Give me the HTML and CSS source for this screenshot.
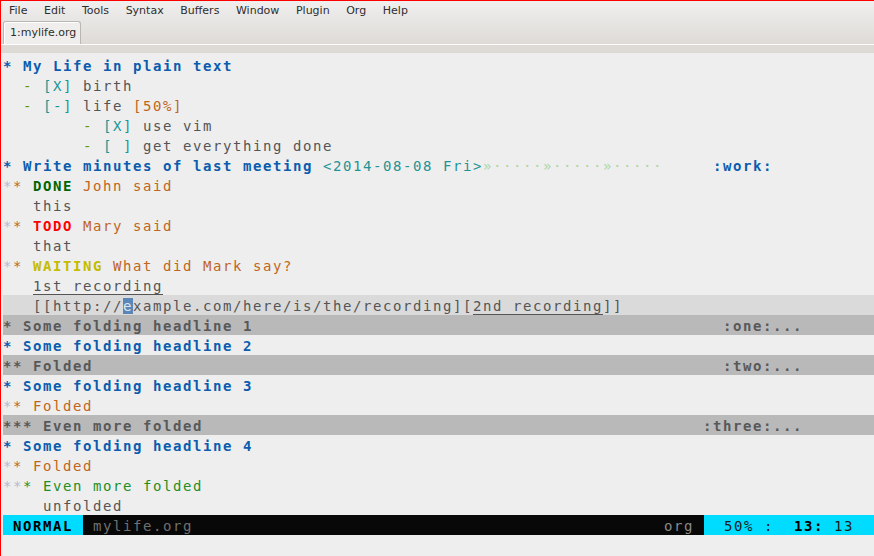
FILE: index.html
```html
<!DOCTYPE html>
<html>
<head>
<meta charset="utf-8">
<title>mylife.org</title>
<link rel="stylesheet" href="styles.css">
</head>
<body>
<div class="win">
  <div class="chrome">
    <nav class="menubar">
      <span class="mi">File</span><span class="mi">Edit</span><span class="mi">Tools</span><span class="mi">Syntax</span><span class="mi">Buffers</span><span class="mi">Window</span><span class="mi">Plugin</span><span class="mi">Org</span><span class="mi">Help</span>
    </nav>
    <div class="tabbar"><div class="tab">1:mylife.org</div></div>
  </div>
  <div class="tabline"></div>
  <div class="pane">
    <div class="buf">
<div class="row"><span class="h1">* My Life in plain text</span></div>
<div class="row">  <span class="dash">-</span> <span class="cb">[X]</span> birth</div>
<div class="row">  <span class="dash">-</span> <span class="cb">[-]</span> life <span class="pct">[50%]</span></div>
<div class="row">        <span class="dash">-</span> <span class="cb">[X]</span> use vim</div>
<div class="row">        <span class="dash">-</span> <span class="cb">[ ]</span> get everything done</div>
<div class="row"><span class="h1">* Write minutes of last meeting </span><span class="ts">&lt;2014-08-08 Fri&gt;</span><span class="lc">»·····»·····»·····</span>     <span class="h1">:work:</span></div>
<div class="row"><span class="s0">*</span><span class="s2">*</span> <span class="done">DONE</span> <span class="h2">John said</span></div>
<div class="row">   this</div>
<div class="row"><span class="s0">*</span><span class="s2">*</span> <span class="todo">TODO</span> <span class="h2">Mary said</span></div>
<div class="row">   that</div>
<div class="row"><span class="s0">*</span><span class="s2">*</span> <span class="wait">WAITING</span> <span class="h2">What did Mark say?</span></div>
<div class="row">   <span class="ul">1st recording</span></div>
<div class="row cursorline">   [[http://<span class="cursor">e</span>xample.com/here/is/the/recording][<span class="ul">2nd recording</span>]]</div>
<div class="row fold">* Some folding headline 1                                               :one:...</div>
<div class="row"><span class="h1">* Some folding headline 2</span></div>
<div class="row fold">** Folded                                                               :two:...</div>
<div class="row"><span class="h1">* Some folding headline 3</span></div>
<div class="row"><span class="s0">*</span><span class="s2">*</span> <span class="h2">Folded</span></div>
<div class="row fold">*** Even more folded                                                  :three:...</div>
<div class="row"><span class="h1">* Some folding headline 4</span></div>
<div class="row"><span class="s0">*</span><span class="s2">*</span> <span class="h2">Folded</span></div>
<div class="row"><span class="s0">**</span><span class="s3">*</span> <span class="h3">Even more folded</span></div>
<div class="row">    unfolded</div>
    </div>
    <div class="status">
      <span class="mode"> NORMAL </span>
      <span class="file"><span> mylife.org</span><span class="ft">org </span></span>
      <span class="pos">  50% :  <b>13:</b> 13  </span>
    </div>
    <div class="cmd"></div>
  </div>
</div>
</body>
</html>
```
FILE: styles.css
```css
html, body {
  margin: 0;
  padding: 0;
  height: 100%;
}
body {
  background: #eeeeee;
  overflow: hidden;
}
.win {
  height: 556px;
  box-sizing: border-box;
  border-top: 1px solid #ff0000;
  border-left: 1px solid #ff0000;
  display: flex;
  flex-direction: column;
}
.chrome {
  height: 43px;
  background: linear-gradient(#f0efee, #dedbd7);
  display: flex;
  flex-direction: column;
}
.menubar {
  height: 19px;
  display: flex;
  align-items: center;
  font-family: "DejaVu Sans", sans-serif;
  font-size: 11px;
  color: #2e2e2e;
}
.mi {
  padding: 0 8.3px;
}
.mi:first-child {
  padding-left: 8px;
}
.tabbar {
  height: 24px;
  display: flex;
  align-items: flex-end;
  padding-left: 2px;
}
.tab {
  height: 23px;
  width: 78px;
  box-sizing: border-box;
  border: 1px solid #bab7b2;
  border-bottom: none;
  border-radius: 3px 3px 0 0;
  background: #efeeec;
  box-shadow: inset 1px 1px 0 #ffffff;
  font-family: "DejaVu Sans", sans-serif;
  font-size: 11px;
  color: #2e2e2e;
  line-height: 22px;
  padding-left: 6px;
}
.tabline {
  height: 9px;
  box-sizing: border-box;
  border-top: 1px solid #ffffff;
  background: #dddad6;
}
.pane {
  flex: 1;
  padding: 2px 0 0 2px;
  display: flex;
  flex-direction: column;
  font-family: "DejaVu Sans Mono", monospace;
  font-size: 14px;
  letter-spacing: 1.5713px;
  line-height: 22px;
  color: #555555;
}
.row {
  height: 20px;
  white-space: pre;
}
.h1 { color: #0b5cad; font-weight: bold; }
.h2 { color: #c0661c; }
.h3 { color: #1f8f1f; }
.s0 { color: #b9b9d4; }
.s2 { color: #c0661c; }
.s3 { color: #1f8f1f; }
.dash { color: #5f9a00; }
.cb { color: #1a9696; }
.pct { color: #c0661c; }
.ts { color: #1f9494; }
.lc { color: #a9d8a9; }
.done { color: #006400; font-weight: bold; }
.todo { color: #ff0000; font-weight: bold; }
.wait { color: #c4bc00; font-weight: bold; }
.ul { text-decoration: underline; text-underline-offset: 3px; }
.cursorline { background: #dadada; }
.cursor { background: #5a86b8; color: #dfe6ef; }
.fold {
  background: #b9b9b9;
  color: #585858;
  font-weight: bold;
}
.status {
  height: 20px;
  display: flex;
  white-space: pre;
}
.mode {
  background: #00dcff;
  color: #000000;
  font-weight: bold;
}
.file {
  flex: 1;
  background: #080808;
  color: #707070;
  display: flex;
  justify-content: space-between;
}
.ft { color: #8a8a8a; }
.pos {
  background: #00dcff;
  color: #1a1a1a;
}
.pos b { color: #000000; }
.cmd {
  flex: 1;
}
```
